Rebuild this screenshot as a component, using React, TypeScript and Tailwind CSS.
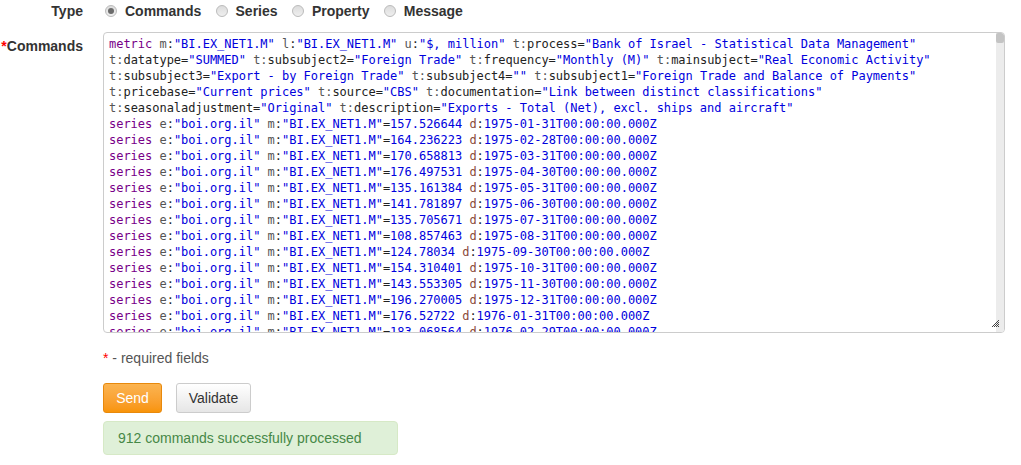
const N = 'text-[#555555]';
const S = 'text-[#0000dd]';

function Attr({ name, value, eq = ':' }: { name: string; value: string; eq?: string }) {
  return (
    <>
      <span className={N}>{name}</span>
      <span className="text-[#222222]">{eq}</span>
      <span className={S}>{value}</span>
    </>
  );
}

function Tag({ name, value }: { name: string; value: string }) {
  return (
    <>
      <span className={N}>t:</span>
      <span className="text-[#222222]">{name}=</span>
      <span className={S}>{value}</span>
    </>
  );
}

const rows = [
  ['157.526644', '1975-01-31'],
  ['164.236223', '1975-02-28'],
  ['170.658813', '1975-03-31'],
  ['176.497531', '1975-04-30'],
  ['135.161384', '1975-05-31'],
  ['141.781897', '1975-06-30'],
  ['135.705671', '1975-07-31'],
  ['108.857463', '1975-08-31'],
  ['124.78034', '1975-09-30'],
  ['154.310401', '1975-10-31'],
  ['143.553305', '1975-11-30'],
  ['196.270005', '1975-12-31'],
  ['176.52722', '1976-01-31'],
  ['183.068564', '1976-02-29'],
];

function SeriesLine({ value, date }: { value: string; date: string }) {
  return (
    <div>
      <span className="text-[#770088]">series</span> <Attr name="e" value={'"boi.org.il"'} />{' '}
      <Attr name="m" value={'"BI.EX_NET1.M"'} />
      <span className="text-[#222222]">=</span>
      <span className={S}>{value}</span> <span className="text-[#8a4a3a]">d</span>
      <span className="text-[#222222]">:</span>
      <span className={S}>{date}T00:00:00.000Z</span>
    </div>
  );
}

function Radio({ label, checked }: { label: string; checked?: boolean }) {
  return (
    <label className="flex items-center gap-[8px] font-bold text-[14px] text-[#333333]">
      <span className="flex h-[12px] w-[12px] items-center justify-center rounded-full border border-[#bbbbbb] bg-gradient-to-b from-[#dcdcdc] to-[#efefef]">
        {checked && <span className="h-[6px] w-[6px] rounded-full bg-[#6b6b6b]" />}
      </span>
      {label}
    </label>
  );
}

// textarea resize grip, dithered triangle
function Grip() {
  const dots: [number, number][] = [];
  for (let y = 0; y < 7; y++) {
    for (let x = 0; x < 7; x++) {
      if (x + y >= 6 && (x + y) % 2 === 0) dots.push([x, y]);
    }
  }
  return (
    <svg className="absolute bottom-[5px] right-[5px]" width="7" height="7" viewBox="0 0 7 7" shapeRendering="crispEdges">
      {dots.map(([x, y]) => (
        <rect key={`${x}-${y}`} x={x} y={y} width="1" height="1" fill="#444444" />
      ))}
    </svg>
  );
}

export default function App() {
  return (
    <div className="h-[465px] w-[1021px] overflow-hidden bg-white font-['Liberation_Sans',sans-serif] text-[14px] text-[#333333]">
      <div className="flex h-[22px] items-center">
        <div className="w-[83px] text-right font-bold">Type</div>
        <div className="ml-[22px] flex gap-[14.3px]">
          <Radio label="Commands" checked />
          <Radio label="Series" />
          <Radio label="Property" />
          <Radio label="Message" />
        </div>
      </div>

      <div className="mt-[10px] flex">
        <div className="w-[83px] pt-[4px] text-right font-bold">
          <span className="text-[#ff0000]">*</span>Commands
        </div>
        <div className="relative ml-[20px] h-[301px] w-[902px] overflow-hidden rounded-[4px] border border-[#cccccc]">
          <div className="whitespace-pre py-[3px] pl-[5px] font-['DejaVu_Sans_Mono',monospace] text-[12px] leading-[16px] tracking-[-0.02px]">
            <div>
              <span className="text-[#770088]">metric</span> <Attr name="m" value={'"BI.EX_NET1.M"'} />{' '}
              <Attr name="l" value={'"BI.EX_NET1.M"'} /> <Attr name="u" value={'"$, million"'} />{' '}
              <Tag name="process" value={'"Bank of Israel - Statistical Data Management"'} />
            </div>
            <div>
              <Tag name="datatype" value={'"SUMMED"'} /> <Tag name="subsubject2" value={'"Foreign Trade"'} />{' '}
              <Tag name="frequency" value={'"Monthly (M)"'} /> <Tag name="mainsubject" value={'"Real Economic Activity"'} />
            </div>
            <div>
              <Tag name="subsubject3" value={'"Export - by Foreign Trade"'} /> <Tag name="subsubject4" value={'""'} />{' '}
              <Tag name="subsubject1" value={'"Foreign Trade and Balance of Payments"'} />
            </div>
            <div>
              <Tag name="pricebase" value={'"Current prices"'} /> <Tag name="source" value={'"CBS"'} />{' '}
              <Tag name="documentation" value={'"Link between distinct classifications"'} />
            </div>
            <div>
              <Tag name="seasonaladjustment" value={'"Original"'} />{' '}
              <Tag name="description" value={'"Exports - Total (Net), excl. ships and aircraft"'} />
            </div>
            {rows.map((r) => (
              <SeriesLine key={r[1]} value={r[0]} date={r[1]} />
            ))}
          </div>
          <div className="absolute bottom-0 right-0 top-0 w-[8px] bg-[#ececec]">
            <div className="h-[10px] rounded-[2px] bg-[#c4c4c4]" />
          </div>
          <Grip />
        </div>
      </div>

      <div className="ml-[103px] mt-[17px] leading-[16px] text-[#555555]">
        <span className="text-[#ff0000]">*</span> - required fields
      </div>

      <div className="ml-[103px] mt-[17px] flex gap-[14px]">
        <button className="h-[30px] w-[59px] rounded-[3px] border border-[#e8890c] bg-gradient-to-b from-[#fbb450] to-[#f89406] text-white">
          Send
        </button>
        <button className="h-[30px] w-[75px] rounded-[3px] border border-[#cccccc] bg-gradient-to-b from-white to-[#e6e6e6] text-[#333333]">
          Validate
        </button>
      </div>

      <div className="ml-[103px] mt-[8px] flex h-[34px] w-[295px] items-center rounded-[4px] border border-[#d6e9c6] bg-[#dff0d8] pl-[14px] text-[#468847]">
        912 commands successfully processed
      </div>
    </div>
  );
}
